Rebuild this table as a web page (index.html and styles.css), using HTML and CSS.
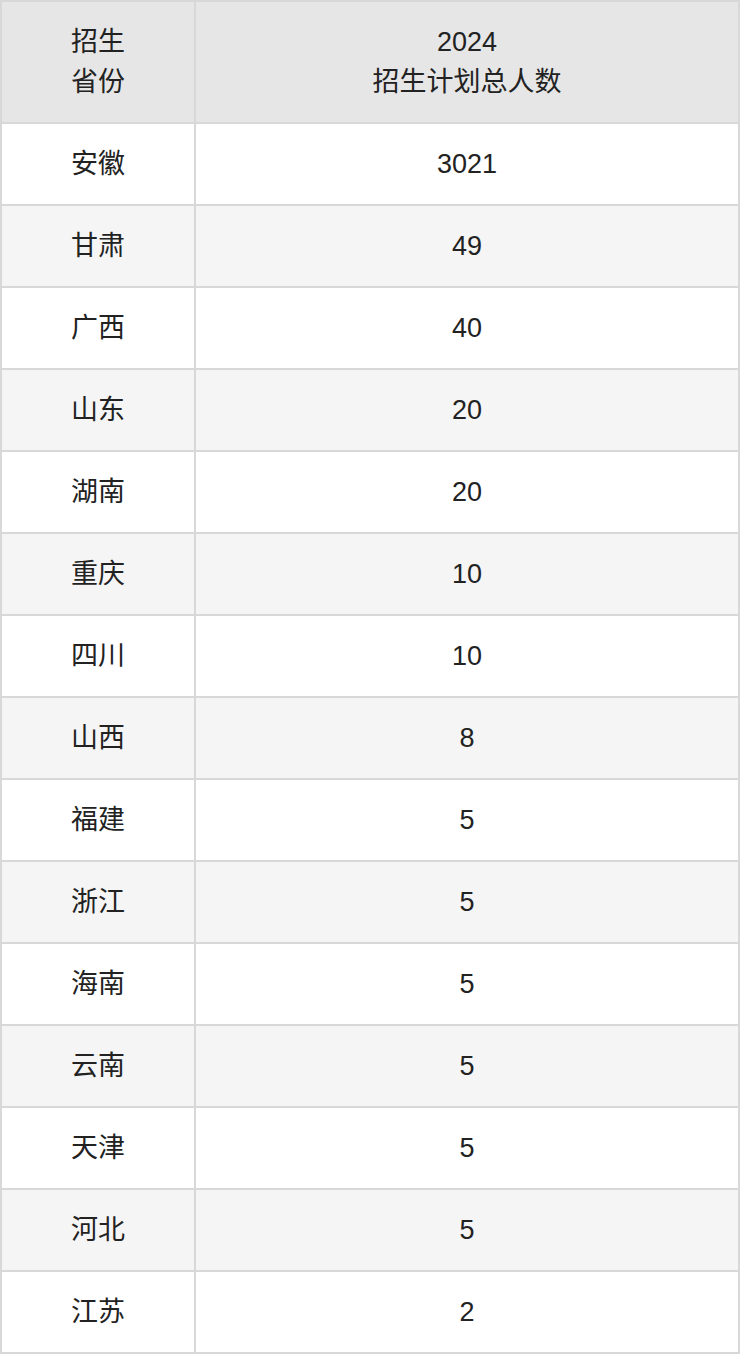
FILE: index.html
```html
<!DOCTYPE html>
<html lang="zh-CN">
<head>
<meta charset="utf-8">
<link rel="stylesheet" href="styles.css">
</head>
<body>
<div class="table">
  <div class="cell head">招生<br>省份</div>
  <div class="cell head">2024<br>招生计划总人数</div>
  <div class="cell">安徽</div><div class="cell">3021</div>
  <div class="cell alt">甘肃</div><div class="cell alt">49</div>
  <div class="cell">广西</div><div class="cell">40</div>
  <div class="cell alt">山东</div><div class="cell alt">20</div>
  <div class="cell">湖南</div><div class="cell">20</div>
  <div class="cell alt">重庆</div><div class="cell alt">10</div>
  <div class="cell">四川</div><div class="cell">10</div>
  <div class="cell alt">山西</div><div class="cell alt">8</div>
  <div class="cell">福建</div><div class="cell">5</div>
  <div class="cell alt">浙江</div><div class="cell alt">5</div>
  <div class="cell">海南</div><div class="cell">5</div>
  <div class="cell alt">云南</div><div class="cell alt">5</div>
  <div class="cell">天津</div><div class="cell">5</div>
  <div class="cell alt">河北</div><div class="cell alt">5</div>
  <div class="cell">江苏</div><div class="cell">2</div>
</div>
</body>
</html>
```
FILE: styles.css
```css
html, body {
  margin: 0;
  padding: 0;
  background: #ffffff;
}
.table {
  width: 740px;
  box-sizing: border-box;
  display: grid;
  grid-template-columns: 194px 544px;
  border-top: 2px solid #d8d8d8;
  border-left: 2px solid #d8d8d8;
  font-family: "Liberation Sans", "Noto Sans CJK SC", sans-serif;
  font-size: 27px;
  line-height: 40px;
  color: #222222;
}
.cell {
  box-sizing: border-box;
  height: 82px;
  padding: 20px 4px;
  text-align: center;
  border-right: 2px solid #d8d8d8;
  border-bottom: 2px solid #d8d8d8;
  background: #ffffff;
}
.cell.head {
  height: 122px;
  background: #e6e6e6;
}
.cell.alt {
  background: #f5f5f5;
}
```
